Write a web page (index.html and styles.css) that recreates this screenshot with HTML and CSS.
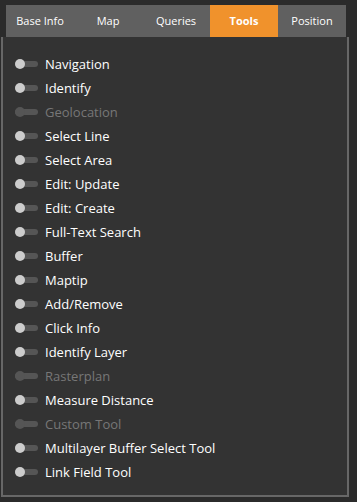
FILE: index.html
```html
<html>
  <head>
    <link rel="stylesheet" href="styles.css">
  </head>
  <body>
    <div class="tabs">
      <div class="tab">Base Info</div>
      <div class="tab">Map</div>
      <div class="tab">Queries</div>
      <div class="tab active">Tools</div>
      <div class="tab">Position</div>
    </div>
    <div class="panel">
      <div class="item"><span class="toggle"></span>Navigation</div>
      <div class="item"><span class="toggle"></span>Identify</div>
      <div class="item off"><span class="toggle"></span>Geolocation</div>
      <div class="item"><span class="toggle"></span>Select Line</div>
      <div class="item"><span class="toggle"></span>Select Area</div>
      <div class="item"><span class="toggle"></span>Edit: Update</div>
      <div class="item"><span class="toggle"></span>Edit: Create</div>
      <div class="item"><span class="toggle"></span>Full-Text Search</div>
      <div class="item"><span class="toggle"></span>Buffer</div>
      <div class="item"><span class="toggle"></span>Maptip</div>
      <div class="item"><span class="toggle"></span>Add/Remove</div>
      <div class="item"><span class="toggle"></span>Click Info</div>
      <div class="item"><span class="toggle"></span>Identify Layer</div>
      <div class="item off"><span class="toggle"></span>Rasterplan</div>
      <div class="item"><span class="toggle"></span>Measure Distance</div>
      <div class="item off"><span class="toggle"></span>Custom Tool</div>
      <div class="item"><span class="toggle"></span>Multilayer Buffer Select Tool</div>
      <div class="item"><span class="toggle"></span>Link Field Tool</div>
    </div>
  </body>
</html>
```
FILE: styles.css
```css
body {
  margin: 0;
  background-color: #2b2b2b;
  font-family: "Open Sans", "Noto Sans", sans-serif;
  width: 357px;
  height: 502px;
}

.tabs {
  display: flex;
  margin: 5px 0 0 6px;
  width: 340px;
  height: 32px;
}

.tab {
  width: 68px;
  height: 32px;
  line-height: 32px;
  text-align: center;
  font-size: 11px;
  color: white;
  background-color: #606060;
}

.tab.active {
  background-color: #f0922c;
  font-weight: bold;
}

.panel {
  margin-left: 1px;
  width: 348px;
  height: 460px;
  border: 2px solid #676767;
  border-top: none;
  background-color: #333333;
  padding-top: 15px;
  box-sizing: border-box;
}

.item {
  display: flex;
  align-items: center;
  height: 24px;
  padding-left: 12px;
  font-size: 13px;
  color: white;
}

.toggle {
  position: relative;
  width: 23px;
  height: 6px;
  border-radius: 3px;
  background-color: #555555;
  margin-right: 7px;
}

.toggle::before {
  content: "";
  position: absolute;
  left: 0;
  top: -2px;
  width: 10px;
  height: 10px;
  border-radius: 5px;
  background-color: #cccccc;
}

.item.off {
  color: #777777;
}

.item.off .toggle::before {
  background-color: #555555;
}
```
